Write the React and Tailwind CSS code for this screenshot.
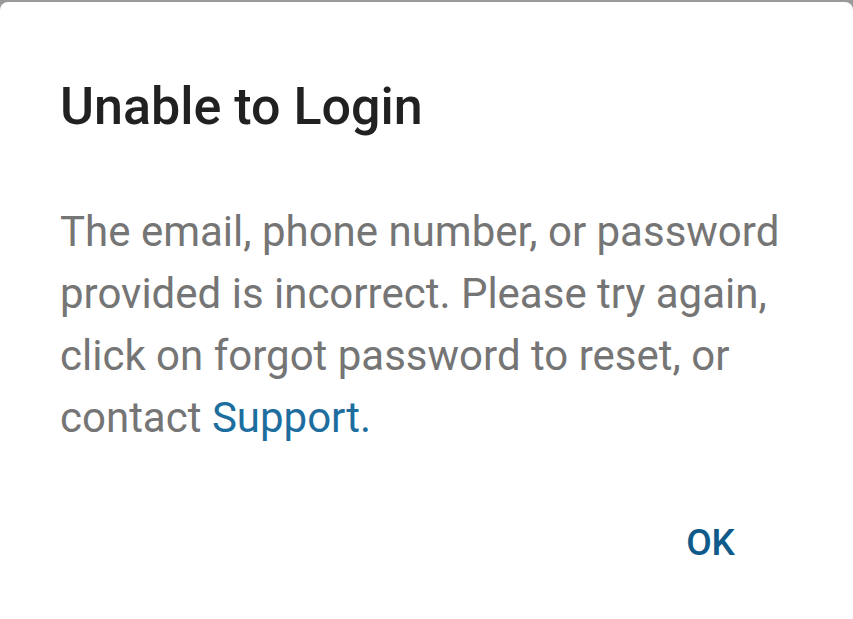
export default function App() {
  return (
    <div className="w-[853px] h-[619px] bg-[#9a9a9a] overflow-hidden" style={{ fontFamily: 'Roboto, "Noto Sans", sans-serif' }}>
      <div className="mt-[2px] h-[617px] bg-white rounded-t-[8px] flex flex-col pl-[60px] pr-[40px]">
        <h1 className="mt-[75px] text-[52px] leading-[60px] font-medium text-[#212121]">Unable to Login</h1>
        <p className="mt-[64px] text-[42px] leading-[62px] text-[#757575]">
          The email, phone number, or password provided is incorrect. Please try again, click on forgot password to reset, or contact <span className="text-[#1d6e9e]">Support.</span>
        </p>
        <div className="mt-[74px] flex justify-end pr-[78px]">
          <span className="text-[37px] font-medium text-[#0e5a8a] leading-[40px]">OK</span>
        </div>
      </div>
    </div>
  );
}
